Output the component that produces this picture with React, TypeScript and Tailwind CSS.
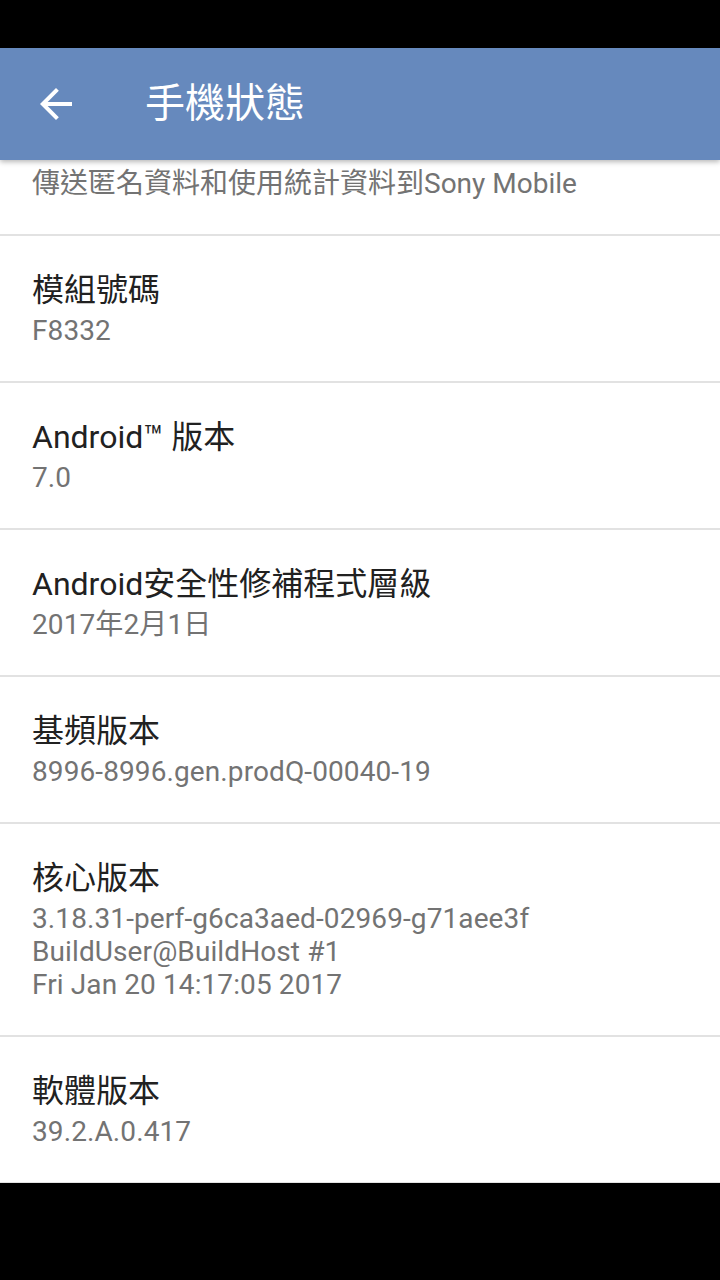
import React from "react";

interface InfoItem {
  title: string;
  lines: string[];
}

const items: InfoItem[] = [
  { title: "模組號碼", lines: ["F8332"] },
  { title: "Android™ 版本", lines: ["7.0"] },
  { title: "Android安全性修補程式層級", lines: ["2017年2月1日"] },
  { title: "基頻版本", lines: ["8996-8996.gen.prodQ-00040-19"] },
  {
    title: "核心版本",
    lines: ["3.18.31-perf-g6ca3aed-02969-g71aee3f", "BuildUser@BuildHost #1", "Fri Jan 20 14:17:05 2017"],
  },
  { title: "軟體版本", lines: ["39.2.A.0.417"] },
];

const font = { fontFamily: 'Roboto, "Noto Sans CJK TC", "Noto Sans", sans-serif' };

const Row: React.FC<{ item: InfoItem }> = ({ item }) => (
  <div className="border-t-2 border-[#e2e2e2] px-[32px] pt-[34px] pb-[34px]">
    <div className="text-[32px] leading-[40px] text-[#212121]">{item.title}</div>
    <div className="mt-[4px]">
      {item.lines.map((l) => (
        <div key={l} className="text-[28px] leading-[33px] text-[#737373] tracking-[0.1px]">
          {l}
        </div>
      ))}
    </div>
  </div>
);

export default function App() {
  return (
    <div className="w-[720px] h-[1280px] flex flex-col bg-white overflow-hidden" style={font}>
      {/* status bar */}
      <div className="h-[48px] bg-black shrink-0" />

      {/* toolbar */}
      <div className="relative z-10 h-[112px] shrink-0 bg-[#6689bd] flex items-center shadow-[0_2px_5px_rgba(0,0,0,0.28)]">
        <div className="w-[48px] h-[48px] ml-[32px] flex items-center justify-center">
          <svg width="48" height="48" viewBox="0 0 24 24" fill="#ffffff">
            <path d="M20 11H7.83l5.59-5.59L12 4l-8 8 8 8 1.41-1.41L7.83 13H20v-2z" />
          </svg>
        </div>
        <div className="ml-[65px] text-[40px] leading-[48px] text-white">手機狀態</div>
      </div>

      {/* list */}
      <div className="shrink-0">
        <div className="px-[32px] pt-[7px] pb-[34px] text-[28px] leading-[33px] text-[#737373]">
          傳送匿名資料和使用統計資料到Sony Mobile
        </div>
        {items.map((it) => (
          <Row key={it.title} item={it} />
        ))}
      </div>

      {/* nav bar */}
      <div className="flex-1 bg-black border-t border-[#e2e2e2]" />
    </div>
  );
}
